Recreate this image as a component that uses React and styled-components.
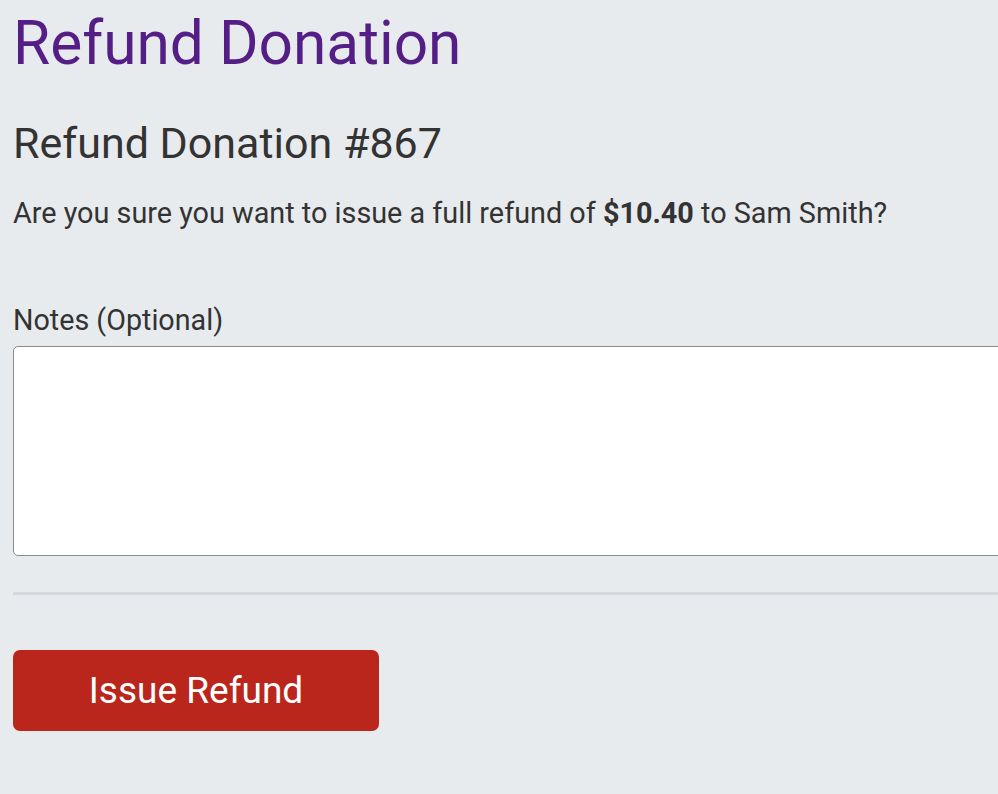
import React from "react";
import styled, { createGlobalStyle } from "styled-components";

const GlobalStyle = createGlobalStyle`
  html, body {
    margin: 0;
    padding: 0;
    background: #e8ebee;
    overflow: hidden;
  }
  body {
    font-family: Roboto, "Liberation Sans", sans-serif;
    color: #333333;
  }
`;

const Page = styled.div`
  width: 1100px;
  padding: 8px 0 0 13px;
  box-sizing: border-box;
`;

const Title = styled.h1`
  margin: 0;
  font-size: 60.4px;
  font-weight: 400;
  line-height: 1.2;
  color: #541e86;
`;

const Subtitle = styled.h2`
  margin: 38px 0 0;
  font-size: 43px;
  font-weight: 400;
  line-height: 1.2;
`;

const Message = styled.p`
  margin: 26px 0 0;
  font-size: 28.8px;
  line-height: 1.2;

  strong {
    font-weight: 700;
  }
`;

const Label = styled.label`
  display: block;
  margin-top: 72px;
  font-size: 28.7px;
  line-height: 1.2;
`;

const Notes = styled.textarea`
  display: block;
  margin-top: 9px;
  width: 100%;
  height: 210px;
  box-sizing: border-box;
  border: 1px solid #8a8a8a;
  border-radius: 5px;
  background: #ffffff;
  resize: none;
  font-family: inherit;
  font-size: 22px;
`;

const Divider = styled.hr`
  margin: 36px 0 0;
  border: 0;
  height: 3px;
  background: #d5d9dd;
`;

const Button = styled.button`
  display: block;
  margin-top: 55px;
  width: 366px;
  height: 81px;
  border: 0;
  border-radius: 7px;
  background: #bb261c;
  color: #ffffff;
  font-family: inherit;
  font-size: 37px;
  cursor: pointer;
`;

export default function App() {
  return (
    <Page>
      <GlobalStyle />
      <Title>Refund Donation</Title>
      <Subtitle>Refund Donation #867</Subtitle>
      <Message>
        Are you sure you want to issue a full refund of <strong>$10.40</strong> to Sam Smith?
      </Message>
      <Label htmlFor="notes">Notes (Optional)</Label>
      <Notes id="notes" />
      <Divider />
      <Button type="button">Issue Refund</Button>
    </Page>
  );
}
